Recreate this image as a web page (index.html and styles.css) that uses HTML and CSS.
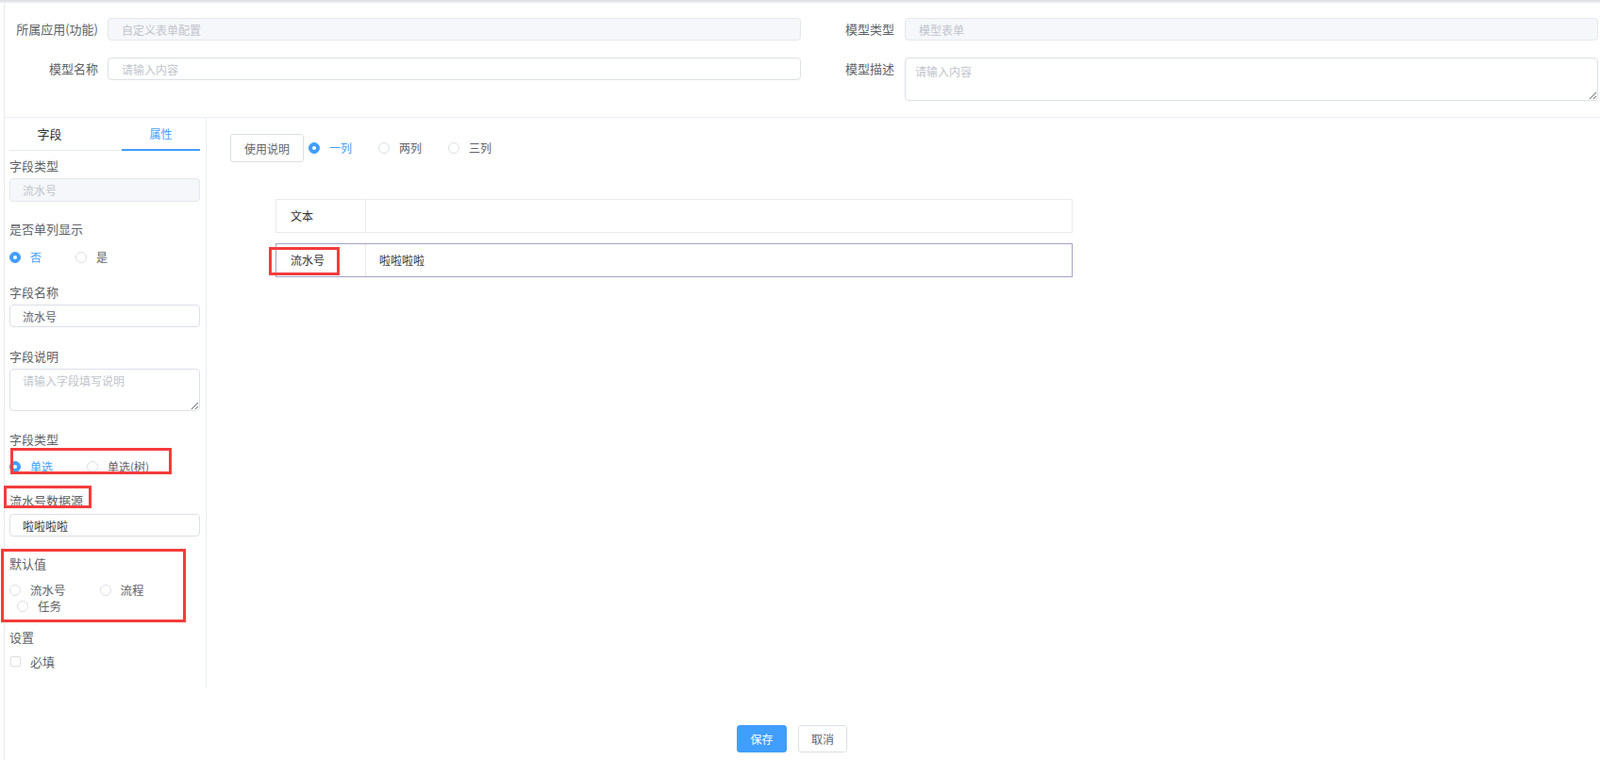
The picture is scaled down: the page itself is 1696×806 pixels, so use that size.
FILE: index.html
```html
<!DOCTYPE html>
<html>

<head>
  <meta charset="UTF-8">
  <link rel="stylesheet" href="styles.css">
  <title>模型配置</title>
</head>

<body>
<div class="topline"></div>
<div class="page">
  <div class="top-form">
    <div class="col col-left">
      <div class="item">
        <label>所属应用(功能)</label>
        <input class="input disabled" type="text" value="自定义表单配置" disabled>
      </div>
      <div class="item item-second">
        <label>模型名称</label>
        <input class="input" type="text" placeholder="请输入内容">
      </div>
    </div>
    <div class="col col-right">
      <div class="item">
        <label>模型类型</label>
        <input class="input disabled" type="text" value="模型表单" disabled>
      </div>
      <div class="item item-second">
        <label>模型描述</label>
        <textarea class="textarea desc" placeholder="请输入内容"></textarea>
      </div>
    </div>
  </div>

  <div class="work">
    <div class="sidebar">
      <div class="tabs">
        <div class="tab">字段</div>
        <div class="tab active">属性</div>
      </div>

      <div class="field-label f1">字段类型</div>
      <input class="input disabled side-input h25" type="text" value="流水号" disabled>

      <div class="field-label f2">是否单列显示</div>
      <div class="radio-group g2">
        <span class="radio checked"><span class="dot"></span><span class="txt">否</span></span>
        <span class="radio"><span class="dot"></span><span class="txt">是</span></span>
      </div>

      <div class="field-label f3">字段名称</div>
      <input class="input side-input" type="text" value="流水号">

      <div class="field-label f4">字段说明</div>
      <textarea class="textarea side-text" placeholder="请输入字段填写说明"></textarea>

      <div class="field-label f5">字段类型</div>
      <div class="radio-group g5">
        <span class="radio checked"><span class="dot"></span><span class="txt">单选</span></span>
        <span class="radio"><span class="dot"></span><span class="txt">单选(树)</span></span>
      </div>

      <div class="field-label f6">流水号数据源</div>
      <input class="input side-input dark g6" type="text" value="啦啦啦啦">

      <div class="field-label f7">默认值</div>
      <div class="radio-group g7">
        <span class="radio"><span class="dot"></span><span class="txt">流水号</span></span>
        <span class="radio"><span class="dot"></span><span class="txt">流程</span></span>
        <span class="radio wrap"><span class="dot"></span><span class="txt">任务</span></span>
      </div>

      <div class="field-label f8">设置</div>
      <div class="check-row">
        <span class="checkbox"></span><span class="txt">必填</span>
      </div>
    </div>

    <div class="main">
      <div class="toolbar">
        <button class="btn">使用说明</button>
        <div class="radio-group cols">
          <span class="radio checked"><span class="dot"></span><span class="txt">一列</span></span>
          <span class="radio"><span class="dot"></span><span class="txt">两列</span></span>
          <span class="radio"><span class="dot"></span><span class="txt">三列</span></span>
        </div>
      </div>

      <div class="preview">
        <div class="row">
          <div class="cell-label">文本</div>
          <div class="cell-value"></div>
        </div>
        <div class="row selected">
          <div class="cell-label">流水号</div>
          <div class="cell-value">啦啦啦啦</div>
        </div>
      </div>
    </div>
  </div>

  <div class="footer">
    <button class="btn btn-primary">保存</button>
    <button class="btn btn-cancel">取消</button>
  </div>
</div>

<!-- annotation frames from the screenshot -->
<div class="mark mark-type"></div>
<div class="mark mark-source"></div>
<div class="mark mark-default"></div>
<div class="mark mark-row"></div>
</body>
</html>
```

FILE: styles.css
```css
body {
    margin: 0;
    padding: 0;
    font-family: "Noto Sans CJK SC", "Noto Sans", sans-serif;
    font-size: 13px;
    color: #606266;
    background: #fff;
}

.topline {
    height: 3px;
    background: linear-gradient(#d9dce3, #eef0f4);
}

.page {
    margin-left: 4px;
    border-left: 1px solid #e8e9ec;
    min-height: calc(100vh - 3px);
    box-sizing: border-box;
}

input, textarea, button {
    font-family: inherit;
    outline: none;
}

/* top form */
.top-form {
    display: flex;
    padding: 16px 2px 17px 0;
    border-bottom: 1px solid #ebeef5;
}

.col-left {
    width: 844px;
}

.col-right {
    flex: 1;
}

.item {
    display: flex;
    align-items: flex-start;
}

.item-second {
    margin-top: 18px;
}

.item label {
    width: 99px;
    padding-right: 10px;
    text-align: right;
    line-height: 24px;
    font-size: 13px;
    color: #606266;
    flex-shrink: 0;
    white-space: nowrap;
}

.col-right .item label {
    width: 99px;
    padding-right: 11px;
}

.input {
    flex: 1;
    height: 24px;
    box-sizing: border-box;
    border: 1px solid #dcdfe6;
    border-radius: 4px;
    padding: 0 14px;
    font-size: 12px;
    color: #606266;
    background: #fff;
    min-width: 0;
}

.input::placeholder, .textarea::placeholder {
    color: #c0c4cc;
}

.input.disabled {
    background: #f5f7fa;
    border-color: #e4e7ed;
    color: #c0c4cc;
    -webkit-text-fill-color: #c0c4cc;
}

.textarea {
    box-sizing: border-box;
    border: 1px solid #dcdfe6;
    border-radius: 4px;
    font-size: 12px;
    line-height: 18px;
    color: #606266;
    resize: vertical;
}

.desc {
    flex: 1;
    height: 46px;
    padding: 5px 10px;
}

/* work area */
.work {
    display: flex;
}

.sidebar {
    width: 214px;
    box-sizing: border-box;
    padding: 0 6px 18px 5px;
    border-right: 1px solid #ebeef5;
}

.tabs {
    display: flex;
    justify-content: space-between;
    height: 35px;
    box-sizing: border-box;
    border-bottom: 1px solid #e4e7ed;
}

.tab {
    width: 83px;
    height: 35px;
    margin-bottom: -1px;
    box-sizing: border-box;
    line-height: 33px;
    text-align: center;
    font-size: 13px;
    color: #303133;
}

.tab:first-child {
    padding-left: 2px;
}

.tab.active {
    color: #409eff;
    font-size: 12px;
    border-bottom: 2px solid #409eff;
}

.field-label {
    line-height: 20px;
    font-size: 13px;
    color: #606266;
}

.f1 { margin-top: 6px; }
.f2 { margin-top: 19px; }
.f3 { margin-top: 17px; }
.f4 { margin-top: 21px; }
.f5 { margin-top: 20px; }
.f6 { margin-top: 16px; }
.f7 { margin-top: 19px; }
.f8 { margin-top: 15px; }

.side-input {
    display: block;
    width: 100%;
    margin-top: 3px;
    padding: 0 13px;
}

.side-input.h25 {
    height: 25px;
}

.side-input.dark {
    color: #333;
}

.g6 {
    margin-top: 4px;
}

.side-text {
    display: block;
    width: 100%;
    height: 45px;
    margin-top: 3px;
    padding: 3px 13px;
}

.radio-group {
    display: flex;
    flex-wrap: wrap;
    line-height: 20px;
}

.g2 { margin-top: 10px; }
.g5 { margin-top: 9px; }

.g7 {
    margin-top: 9px;
    line-height: 17px;
}

.radio {
    display: inline-flex;
    align-items: center;
    margin-right: 36px;
    font-size: 12px;
    color: #606266;
}

.radio .dot {
    width: 12px;
    height: 12px;
    box-sizing: border-box;
    border: 1px solid #dcdfe6;
    border-radius: 50%;
    margin-right: 10px;
    background: #fff;
    position: relative;
}

.radio.checked .dot {
    background: #409eff;
    border-color: #409eff;
}

.radio.checked .dot::after {
    content: "";
    position: absolute;
    left: 3px;
    top: 3px;
    width: 4px;
    height: 4px;
    border-radius: 50%;
    background: #fff;
}

.radio.checked .txt {
    color: #409eff;
}

.g7 .radio .txt {
    font-size: 12.5px;
}

.radio.wrap {
    margin-left: 8px;
}

.check-row {
    display: flex;
    align-items: center;
    height: 20px;
    margin-top: 5px;
    font-size: 13px;
}

.checkbox {
    width: 11px;
    height: 11px;
    box-sizing: border-box;
    border: 1px solid #dcdfe6;
    border-radius: 2px;
    margin: 0 10px 0 1px;
}

/* main */
.main {
    flex: 1;
    padding: 17px 0 0 25px;
}

.toolbar {
    display: flex;
    align-items: center;
}

.btn {
    height: 30px;
    padding: 0 14px;
    border: 1px solid #dcdfe6;
    border-radius: 3px;
    background: #fff;
    color: #606266;
    font-size: 12px;
    cursor: pointer;
}

.cols {
    margin-left: 5px;
}

.cols .radio {
    margin-right: 28px;
}

.preview {
    width: 845px;
    margin: 39px 0 0 48px;
}

.row {
    display: flex;
    height: 36px;
    box-sizing: border-box;
    border: 1px solid #ebebeb;
    margin-bottom: 11px;
    font-size: 12px;
    color: #303133;
}

.row.selected {
    border-color: #a2a4c9;
}

.cell-label {
    width: 95px;
    box-sizing: border-box;
    padding-left: 15px;
    border-right: 1px solid #ebebeb;
    line-height: 34px;
}

.cell-value {
    flex: 1;
    padding-left: 14px;
    line-height: 34px;
}

/* footer */
.footer {
    display: flex;
    gap: 12px;
    padding: 40px 0 0 776px;
}

.btn-primary {
    width: 53px;
    height: 29px;
    padding: 0;
    background: #409eff;
    border-color: #409eff;
    color: #fff;
}

.btn-cancel {
    width: 52px;
    height: 29px;
    padding: 0;
}

/* red annotation frames */
.mark {
    position: absolute;
    border: 3px solid #f43c3c;
    box-sizing: border-box;
}

.mark-type {
    left: 11px;
    top: 475px;
    width: 171px;
    height: 28px;
}

.mark-source {
    left: 4px;
    top: 515px;
    width: 93px;
    height: 24px;
}

.mark-default {
    left: 1px;
    top: 582px;
    width: 196px;
    height: 78px;
}

.mark-row {
    left: 285px;
    top: 262px;
    width: 75px;
    height: 30px;
}
```
